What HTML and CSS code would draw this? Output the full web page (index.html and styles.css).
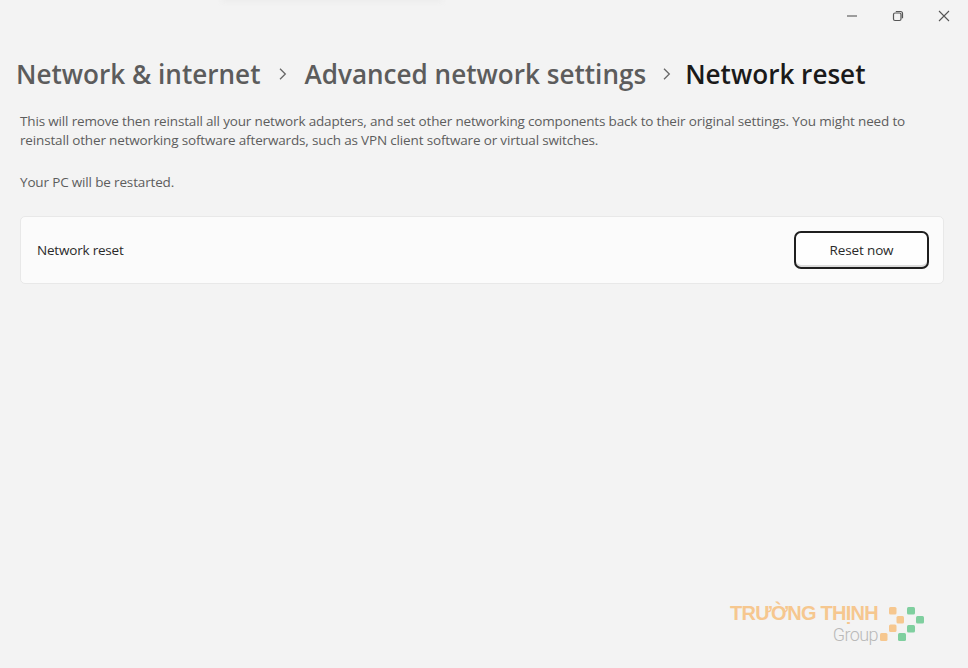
FILE: index.html
```html
<!DOCTYPE html>
<html lang="en">
<head>
    <meta charset="UTF-8">
    <meta name="viewport" content="width=device-width, initial-scale=1.0">
    <title>Network reset</title>
    <link rel="stylesheet" href="styles.css">
</head>
<body>
    <div class="top-shadow"></div>
    <div class="titlebar">
        <span class="win-btn">
            <svg width="12" height="12" viewBox="0 0 12 12"><path d="M1 6h10" stroke="#555" stroke-width="1.1" fill="none"/></svg>
        </span>
        <span class="win-btn">
            <svg width="12" height="12" viewBox="0 0 12 12"><rect x="1.5" y="3" width="7.5" height="7.5" rx="1.5" stroke="#555" stroke-width="1.2" fill="none"/><path d="M3.8 1.5h4.7a2 2 0 0 1 2 2v4.7" stroke="#555" stroke-width="1.2" fill="none"/></svg>
        </span>
        <span class="win-btn">
            <svg width="12" height="12" viewBox="0 0 12 12"><path d="M1 1l10 10M11 1L1 11" stroke="#555" stroke-width="1.1" fill="none"/></svg>
        </span>
    </div>

    <div class="breadcrumb">
        <span class="crumb">Network &amp; internet</span>
        <svg class="chevron" width="10" height="12" viewBox="0 0 10 12"><path d="M2 .8L7.3 6 2 11.2" stroke="#666" stroke-width="1.3" fill="none"/></svg>
        <span class="crumb">Advanced network settings</span>
        <svg class="chevron tight" width="10" height="12" viewBox="0 0 10 12"><path d="M2 .8L7.3 6 2 11.2" stroke="#666" stroke-width="1.3" fill="none"/></svg>
        <span class="crumb current">Network reset</span>
    </div>

    <div class="content">
        <p class="desc">This will remove then reinstall all your network adapters, and set other networking components back to their original settings. You might need to<br>reinstall other networking software afterwards, such as VPN client software or virtual switches.</p>
        <p class="desc restart">Your PC will be restarted.</p>
        <div class="card">
            <span class="card-label">Network reset</span>
            <button class="reset-btn">Reset now</button>
        </div>
    </div>

    <div class="logo">
        <div class="logo-text">
            <div class="logo-name">TRƯỜNG THỊNH</div>
            <div class="logo-group">Group</div>
        </div>
        <svg class="logo-mark" width="45" height="36" viewBox="0 0 45 36">
            <rect x="9" y="1" width="7.5" height="7.5" rx="1.5" fill="#f6c78f"/>
            <rect x="16.5" y="10" width="7.5" height="7.5" rx="1.5" fill="#f6c78f"/>
            <rect x="9" y="18.5" width="7.5" height="7.5" rx="1.5" fill="#f6c78f"/>
            <rect x="0" y="27" width="7.5" height="8" rx="1.5" fill="#f6c78f"/>
            <rect x="27" y="1" width="8" height="7.5" rx="1.5" fill="#7fcf9f"/>
            <rect x="36" y="10" width="8" height="7.5" rx="1.5" fill="#7fcf9f"/>
            <rect x="27" y="19" width="8" height="7.5" rx="1.5" fill="#7fcf9f"/>
            <rect x="18" y="27" width="8" height="8" rx="1.5" fill="#7fcf9f"/>
        </svg>
    </div>
</body>
</html>
```

FILE: styles.css
```css
html, body {
    height: 100%;
}
body {
    margin: 0;
    background: #f3f3f3;
    font-family: 'Open Sans', sans-serif;
    color: #1b1b1b;
    display: flex;
    flex-direction: column;
    position: relative;
    overflow: hidden;
}
.top-shadow {
    position: absolute;
    top: -4px;
    left: 222px;
    width: 220px;
    height: 6px;
    background: #ececec;
    filter: blur(2px);
}
.titlebar {
    display: flex;
    justify-content: flex-end;
    gap: 34px;
    padding: 10px 18px 0 0;
    height: 22px;
}
.win-btn {
    display: flex;
    width: 12px;
    height: 12px;
}
.breadcrumb {
    display: flex;
    align-items: center;
    margin-top: 23px;
    padding-left: 16px;
    height: 38px;
}
.crumb {
    font-size: 26.1px;
    font-weight: 600;
    color: #5c5c5c;
    white-space: nowrap;
}
.crumb.current {
    color: #1a1a1a;
}
.chevron {
    margin: 0 16px 0 18px;
}
.chevron.tight {
    margin: 0 13px 0 16px;
}
.content {
    padding: 0 24px 0 20px;
}
.desc {
    margin: 19px 0 0;
    font-size: 13.5px;
    letter-spacing: -0.16px;
    line-height: 19px;
    color: #5d5d5d;
    white-space: nowrap;
}
.desc.restart {
    margin-top: 23px;
}
.card {
    display: flex;
    align-items: center;
    justify-content: space-between;
    height: 66px;
    margin-top: 24px;
    padding: 0 14px 0 16px;
    background: #fbfbfb;
    border: 1px solid #e8e8e8;
    border-radius: 5px;
}
.card-label {
    font-size: 13.5px;
    letter-spacing: -0.2px;
    color: #2a2a2a;
}
.reset-btn {
    width: 135px;
    height: 38px;
    margin-top: -1px;
    background: #fefefe;
    border: 2px solid #1f1f1f;
    border-radius: 7px;
    font-family: inherit;
    font-size: 13.5px;
    letter-spacing: -0.135px;
    color: #2a2a2a;
    box-shadow: inset 0 -2px 0 #dcdcdc;
}
.logo {
    position: absolute;
    left: 730px;
    top: 602px;
    display: flex;
    gap: 2px;
}
.logo-text {
    display: flex;
    flex-direction: column;
    align-items: flex-end;
}
.logo-name {
    font-family: 'Liberation Sans', sans-serif;
    font-size: 20px;
    font-weight: 700;
    line-height: 22px;
    letter-spacing: -0.75px;
    color: #f6c78f;
    white-space: nowrap;
}
.logo-group {
    font-family: 'Roboto', sans-serif;
    font-weight: 300;
    font-size: 18px;
    line-height: 22px;
    letter-spacing: -0.6px;
    color: #b9b9b9;
}
.logo-mark {
    margin-top: 4px;
}
```
